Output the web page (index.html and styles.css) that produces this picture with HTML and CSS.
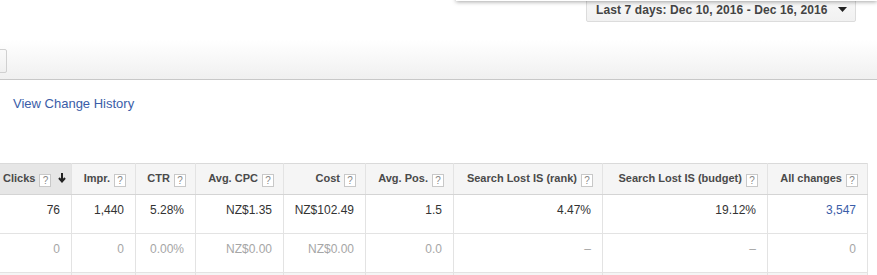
FILE: index.html
```html
<!DOCTYPE html>
<html lang="en">
<head>
    <meta charset="UTF-8">
    <meta name="viewport" content="width=device-width, initial-scale=1.0">
    <title>Campaign Stats</title>
    <link rel="stylesheet" href="styles.css">
</head>
<body>
    <div class="top-bar">
        <div class="menu-shadow"></div>
        <button class="date-range">
            <span>Last 7 days: Dec 10, 2016 - Dec 16, 2016</span>
            <svg width="9" height="5" viewBox="0 0 9 5"><path d="M0 0h9L4.5 5z" fill="#222"/></svg>
        </button>
    </div>

    <div class="toolbar">
        <span class="tool-btn"></span>
    </div>

    <div class="history">
        <a href="#">View Change History</a>
    </div>

    <table class="stats">
        <colgroup>
            <col style="width:72px">
            <col style="width:64px">
            <col style="width:60px">
            <col style="width:88px">
            <col style="width:82px">
            <col style="width:88px">
            <col style="width:149px">
            <col style="width:165px">
            <col style="width:100px">
        </colgroup>
        <thead>
            <tr>
                <th class="sorted">Clicks <span class="help">?</span>
                    <svg class="sort" width="8" height="10" viewBox="0 0 8 10"><path d="M4 0v8M1 5l3 3.5L7 5" fill="none" stroke="#222" stroke-width="2"/></svg>
                </th>
                <th>Impr. <span class="help">?</span></th>
                <th>CTR <span class="help">?</span></th>
                <th>Avg. CPC <span class="help">?</span></th>
                <th>Cost <span class="help">?</span></th>
                <th>Avg. Pos. <span class="help">?</span></th>
                <th>Search Lost IS (rank) <span class="help">?</span></th>
                <th>Search Lost IS (budget) <span class="help">?</span></th>
                <th>All changes <span class="help">?</span></th>
            </tr>
        </thead>
        <tbody>
            <tr>
                <td>76</td>
                <td>1,440</td>
                <td>5.28%</td>
                <td>NZ$1.35</td>
                <td>NZ$102.49</td>
                <td>1.5</td>
                <td>4.47%</td>
                <td>19.12%</td>
                <td><a href="#">3,547</a></td>
            </tr>
            <tr class="muted">
                <td>0</td>
                <td>0</td>
                <td>0.00%</td>
                <td>NZ$0.00</td>
                <td>NZ$0.00</td>
                <td>0.0</td>
                <td>&ndash;</td>
                <td>&ndash;</td>
                <td>0</td>
            </tr>
            <tr class="footer">
                <td></td><td></td><td></td><td></td><td></td><td></td><td></td><td></td><td></td>
            </tr>
        </tbody>
    </table>
</body>
</html>
```

FILE: styles.css
```css
body {
    font-family: "Liberation Sans", Arial, sans-serif;
    margin: 0;
    color: #333;
    background: #fff;
    width: 877px;
    overflow: hidden;
}

a {
    color: #3a5da8;
    text-decoration: none;
}

.top-bar {
    position: relative;
    height: 40px;
    display: flex;
    justify-content: flex-end;
    align-items: flex-start;
    padding-right: 21px;
}

.menu-shadow {
    position: absolute;
    left: 456px;
    right: 0;
    top: -10px;
    height: 11px;
    background: #fff;
    box-shadow: 0 1px 4px rgba(0, 0, 0, 0.35);
}

.date-range {
    display: flex;
    align-items: center;
    justify-content: space-between;
    height: 24px;
    margin-top: -2px;
    padding: 0 8px 0 9px;
    width: 270px;
    background: linear-gradient(#f8f8f8, #f1f1f1);
    border: 1px solid #dcdcdc;
    border-radius: 2px;
    font-family: "Liberation Sans", Arial, sans-serif;
    font-size: 12px;
    font-weight: bold;
    letter-spacing: 0.1px;
    color: #444;
}

.date-range svg {
    margin-top: -2px;
}

.toolbar {
    height: 39px;
    border-bottom: 1px solid #c8c8c8;
    background: linear-gradient(#fff, #f0f0f0);
    display: flex;
    align-items: center;
}

.tool-btn {
    display: block;
    width: 20px;
    height: 22px;
    margin-left: -15px;
    margin-top: 3px;
    border: 1px solid #d0d0d0;
    border-radius: 2px;
    background: linear-gradient(#fafafa, #f0f0f0);
}

.history {
    height: 83px;
    padding-left: 13px;
    font-size: 13px;
    line-height: 15px;
}

.history a {
    display: inline-block;
    margin-top: 16px;
}

.stats {
    border-collapse: collapse;
    table-layout: fixed;
    width: 868px;
    margin-left: -1px;
    font-size: 12px;
}

.stats th,
.stats td {
    border: 1px solid #e3e3e3;
    text-align: right;
    white-space: nowrap;
    overflow: hidden;
}

.stats th {
    height: 30px;
    padding: 0 9px 0 0;
    background: #f5f5f5;
    border-top-color: #dadada;
    border-bottom-color: #d4d4d4;
    font-size: 11px;
    font-weight: bold;
    color: #4a4a4a;
}

.stats th.sorted {
    background: #e6e6e6;
    padding-right: 4px;
    text-align: left;
    padding-left: 3px;
}

.help {
    display: inline-block;
    width: 10px;
    height: 11px;
    line-height: 11px;
    border: 1px solid #c8c8c8;
    background: #fff;
    font-size: 10px;
    font-weight: normal;
    color: #888;
    text-align: center;
    vertical-align: -2px;
    margin-left: 1px;
}

.sort {
    margin-left: 3px;
    vertical-align: -1px;
}

.stats td {
    height: 38px;
    padding: 0 11px 0 0;
    vertical-align: top;
    line-height: 30px;
}

.stats tr.muted td {
    color: #a6a6a6;
}

.stats tr.footer td {
    height: 6px;
    background: #f5f5f5;
}
```
